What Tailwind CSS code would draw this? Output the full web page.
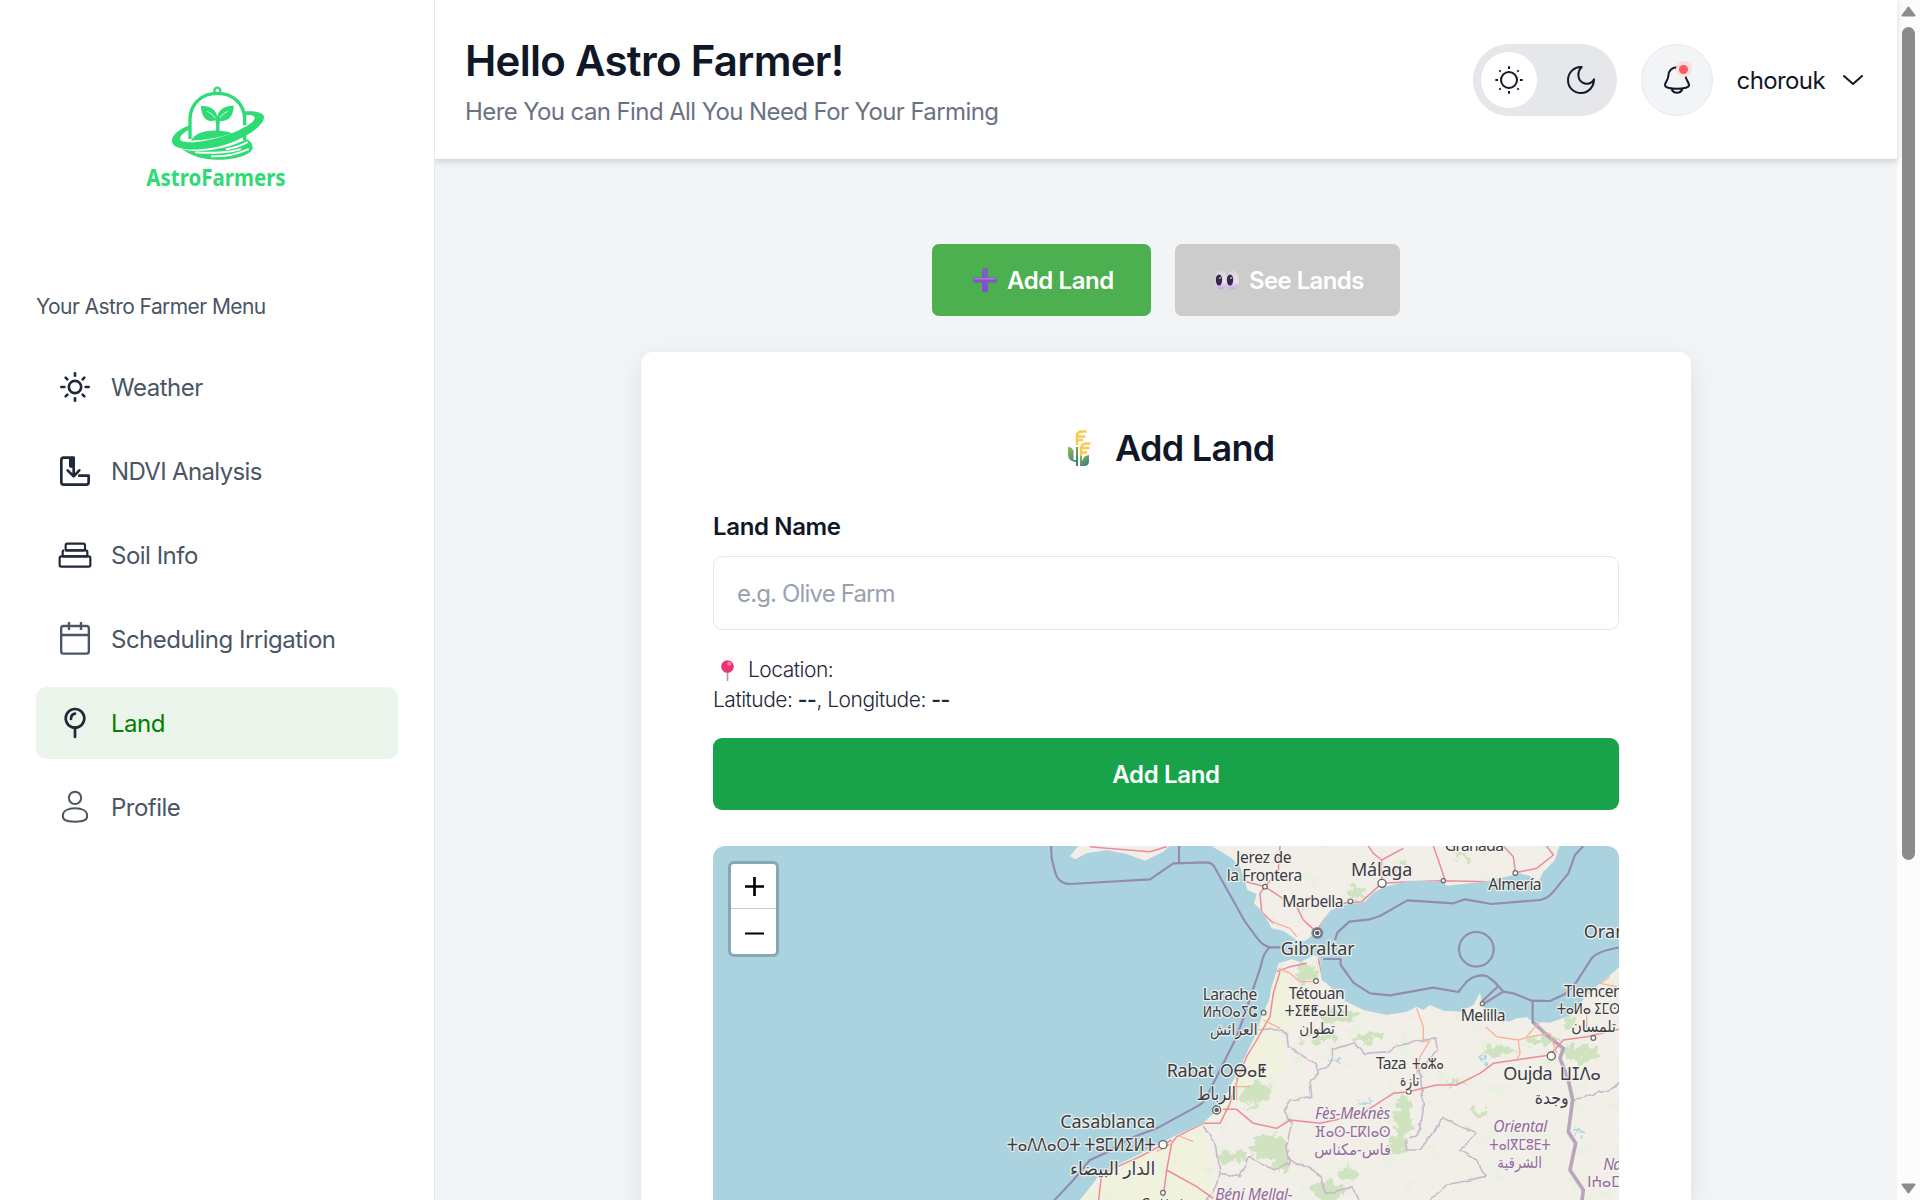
<!DOCTYPE html>
<html lang="en">
<head>
<meta charset="utf-8">
<title>Astro Farmers</title>
<script src="https://cdn.jsdelivr.net/npm/@tailwindcss/browser@4"></script>
</head>
<body class="h-[1200px] overflow-hidden bg-white font-['Inter',sans-serif] text-[24px] text-gray-900">
<div class="flex h-[1200px] w-[1920px]">

<aside class="relative z-20 w-[435px] shrink-0 border-r border-[#e2e8f0] bg-white">
  <svg class="ml-[120px] mt-[70px] block h-[130px] w-[200px]" viewBox="0 0 600 390" fill="none" stroke="#2edb74" stroke-linecap="round" stroke-linejoin="round">
    <circle cx="292" cy="62" r="9" stroke-width="7"/>
    <path d="M210 207V146C212 100 246 70 292 70S372 100 374 146V166M374 196V210" stroke-width="10" stroke-linecap="butt"/>
    <path d="M288 186C289 172 289 160 286 151C272 155 257 153 250 138C245 128 243 118 243 108C268 106 288 118 292 140C296 118 316 106 341 107C341 130 332 154 300 153C298 162 298 172 299 186Z" fill="#2edb74" stroke="none"/>
    <path d="M262 124Q278 130 286 144M322 124Q308 130 300 143" stroke="#fff" stroke-width="2.500"/>
    <path d="M213 212C225 188 262 180 292 182C312 182 326 185 336 190C300 203 250 211 213 212Z" fill="#2edb74" stroke="none"/>
    <path d="M375 124C408 122 432 127 432 142C432 168 376 206 310 226C254 243 160 246 156 216C153 195 182 175 209 166V178C192 187 180 197 180 207C183 224 250 217 300 202C350 188 403 160 404 145C404 135 392 134 375 136Z" fill="#2edb74" stroke="none"/>
    <path d="M185 236C222 254 332 236 379 207C392 213 398 223 398 234C394 256 342 270 292 269C250 268 212 258 185 236Z" fill="#2edb74" stroke="none"/>
    <path d="M228 247C270 251 330 247 360 238M276 259C310 260 352 252 384 238M320 238C350 232 368 224 381 217" stroke="#fff" stroke-width="6"/>
    <text x="79" y="348" textLength="418" lengthAdjust="spacingAndGlyphs" fill="#2edb74" stroke="none" font-family="Noto Sans, Open Sans, sans-serif" font-weight="700" font-size="71">AstroFarmers</text>
  </svg>
  <div class="mt-[92px] pl-9 text-[21px] leading-[30px] tracking-[-0.58px] text-gray-600">Your Astro Farmer Menu</div>
  <nav class="mt-[29px] flex flex-col gap-3 px-9 tracking-[-0.5px] text-gray-600">
    <a class="flex h-[72px] items-center gap-[18px] pl-[21px]">
      <svg class="size-9" viewBox="0 0 108 108" fill="none" stroke="#1f2937" stroke-width="8" stroke-linecap="round"><circle cx="54" cy="54" r="18.500"/><path d="M54 13v7M54 88v7M13 54h9M86 54h9M26 26l5 5M77 77l5 5M26 82l5-5M77 31l5-5"/></svg>
      <span class="pt-0.5">Weather</span></a>
    <a class="flex h-[72px] items-center gap-[18px] pl-[21px]">
      <svg class="size-9" viewBox="0 0 108 108" fill="none" stroke="#1f2937" stroke-width="8" stroke-linecap="round" stroke-linejoin="round"><path d="M50 14H20q-7 0-7 7V88q0 7 7 7H88q7 0 7-7V68H67M50 14V66M40 14V40M45 14V40M32 52L50 70L67 52"/></svg>
      <span class="pt-0.5 tracking-[-0.65px]">NDVI Analysis</span></a>
    <a class="flex h-[72px] items-center gap-[18px] pl-[21px]">
      <svg class="size-9" viewBox="0 0 108 108" fill="none" stroke="#1f2937" stroke-width="6.500" stroke-linejoin="round"><rect x="26" y="20" width="58" height="20" rx="5"/><path d="M24 40h62q5 0 5 5v13H17V45q0-5 5-5"/><rect x="8" y="58" width="92" height="31" rx="5"/></svg>
      <span class="pt-0.5">Soil Info</span></a>
    <a class="flex h-[72px] items-center gap-[18px] pl-[21px]">
      <svg class="size-9" viewBox="0 0 108 108" fill="none" stroke="#4b5563" stroke-width="7"><rect x="12.500" y="15" width="83" height="83" rx="7"/><path d="M12 42h84M36 3v24M72 3v24"/></svg>
      <span class="pt-0.5">Scheduling Irrigation</span></a>
    <a class="flex h-[72px] items-center gap-[18px] rounded-[10px] bg-[#ebf5ec] pl-[21px] text-[#008000]">
      <svg class="size-9" viewBox="0 0 108 108" fill="none" stroke="#1f2937" stroke-width="8" stroke-linecap="round"><circle cx="54" cy="40" r="28"/><path d="M54 68v28M42 42q0-14 12-16"/></svg>
      <span class="pt-0.5">Land</span></a>
    <a class="flex h-[72px] items-center gap-[18px] pl-[21px]">
      <svg class="size-9" viewBox="0 0 108 108" fill="none" stroke="#4b5563" stroke-width="6"><circle cx="54" cy="26.500" r="18.500"/><path d="M17.500 80C17.500 66 32 58 54 58S90.500 66 90.500 80C90.500 92 83 98 54 98S17.500 92 17.500 80Z"/></svg>
      <span class="pt-0.5">Profile</span></a>
  </nav>
</aside>

<div class="flex min-w-0 flex-1 flex-col bg-gray-100">
  <header class="z-10 flex h-[160px] shrink-0 items-start justify-between border-b border-[#d8dae6] bg-white pl-[30px] pr-[34px] shadow-[0_2px_6px_rgba(30,35,80,0.16)]">
    <div class="pt-[34px]">
      <h1 class="text-[42px] font-semibold leading-[54px] tracking-[-0.72px]">Hello Astro Farmer!</h1>
      <p class="mt-[6px] leading-9 tracking-[-0.6px] text-gray-500">Here You can Find All You Need For Your Farming</p>
    </div>
    <div class="flex items-center gap-6 pt-11">
      <div class="flex h-[72px] w-36 items-center rounded-full bg-[#e5e7eb] pl-[7px]">
        <div class="flex size-[58px] items-center justify-center rounded-full border border-gray-200 bg-white">
          <svg class="size-[30px]" viewBox="0 0 90 90" fill="none" stroke="#111827" stroke-width="6"><circle cx="45" cy="45" r="24"/><path d="M45 4v8M45 78v8M4 45h8M78 45h8M16 16l4 4M70 70l4 4M16 74l4-4M70 20l4-4"/></svg>
        </div>
        <svg class="ml-[28px] size-[30px]" viewBox="0 0 90 90" fill="none" stroke="#111827" stroke-width="6" stroke-linejoin="round"><path d="M47 6C26 4 6 22 6 45C6 68 23 84 46 84C67 84 84 66 84 43C78 56 62 60 50 53C34 44 33 20 47 6Z"/></svg>
      </div>
      <div class="relative flex size-[72px] items-center justify-center rounded-full border border-[#e2e8f0] bg-gray-100">
        <svg class="size-[30px]" viewBox="0 0 90 90" fill="none" stroke="#111827" stroke-width="6" stroke-linecap="round"><path d="M45 7C29 7 19 18 19 32C20 45 9 50 9 60Q9 66 18 68Q45 74 72 68Q81 66 81 60C81 50 70 45 71 32M28 72Q33 83 45 83T62 72"/></svg>
        <div class="absolute left-[34px] top-[16px] flex size-4 items-center justify-center rounded-full bg-[#f9dede]"><div class="size-[9px] rounded-full bg-[#f65c5c]"></div></div>
      </div>
      <div class="flex items-center gap-[18px]"><span class="pt-0.5 tracking-[-0.6px]">chorouk</span>
        <svg class="h-[12px] w-[20px]" viewBox="0 0 60 36" fill="none" stroke="#111827" stroke-width="6" stroke-linecap="round" stroke-linejoin="round"><path d="M3 6L30 30L57 6"/></svg></div>
    </div>
  </header>

  <main class="flex min-h-0 flex-1 flex-col items-center overflow-hidden pt-[84px]">
    <div class="flex gap-6 font-semibold text-white">
      <button class="flex h-[72px] w-[219px] items-center rounded-[7px] bg-[#4caf50] pl-[41px]">
        <svg class="mr-[10px] size-6" viewBox="0 0 24 24"><defs><linearGradient id="pl" x1="0" y1="0" x2="0" y2="1"><stop stop-color="#7a67b2"/><stop offset="1" stop-color="#8a45dd"/></linearGradient></defs><rect x="9" y="0" width="6" height="24" rx="2" fill="url(#pl)"/><rect x="0" y="9.500" width="24" height="5" rx="2" fill="#8450cd"/><rect x="1" y="10" width="22" height="1.500" rx=".7" fill="#a083cf"/></svg>
        <span class="pt-0.5 tracking-[-0.4px]">Add Land</span></button>
      <button class="flex h-[72px] w-[225px] items-center rounded-[7px] bg-[#cccccc] pl-10">
        <svg class="mr-[10px] size-6" viewBox="0 0 24 24"><defs><linearGradient id="ey" x1="0" y1="0" x2="0" y2="1"><stop stop-color="#d8d3da"/><stop offset=".6" stop-color="#e9e2ec"/><stop offset="1" stop-color="#c99fe3"/></linearGradient></defs><ellipse cx="6" cy="12" rx="6" ry="9.500" fill="url(#ey)"/><ellipse cx="18" cy="12" rx="6" ry="9.500" fill="url(#ey)"/><ellipse cx="4" cy="12" rx="3.200" ry="5.500" fill="#38274a"/><ellipse cx="15" cy="12" rx="3.200" ry="5.500" fill="#38274a"/><circle cx="5" cy="10" r="1" fill="#bbb"/><circle cx="16" cy="10" r="1" fill="#bbb"/></svg>
        <span class="whitespace-nowrap pt-0.5 tracking-[-0.6px]">See Lands</span></button>
    </div>

    <section class="mt-9 w-[1050px] shrink-0 rounded-t-[12px] bg-white px-[72px] pt-[72px] shadow-[0_8px_24px_rgba(30,35,60,0.10)]">
      <h2 class="flex h-12 items-center pl-[355px] text-[36px] font-semibold leading-12 tracking-[-0.7px]">
        <svg class="mr-[23px] h-9 w-6 shrink-0" viewBox="0 0 24 36"><defs><linearGradient id="lf" x1="0" y1="0" x2=".6" y2="1"><stop stop-color="#8cc04f"/><stop offset="1" stop-color="#3c7d83"/></linearGradient></defs><path d="M0 17q5 0 5.500 5v8H8V17h2v19H8v-4Q0 31 0 25Z" fill="url(#lf)"/><path d="M12 36V26h2v5q2-6 7-6v6q0 5-5 5Z" fill="url(#lf)"/><path d="M9 15V6Q9 1.500 14 1.500H18.500M9 6.500H17.500M9 10H15M13 26V18Q14 13.500 18 13.500H22.500M13.500 18H21.500M13.500 22.500H19" fill="none" stroke="#fbc94b" stroke-width="2.600"/></svg>
        <span class="whitespace-nowrap">Add Land</span></h2>
      <label class="mt-[37px] block font-semibold leading-9 tracking-[-0.35px]">Land Name</label>
      <div class="mt-[11px] flex h-[74px] items-center rounded-[9px] border border-gray-200 pl-[23px] pt-0.5 tracking-[-0.85px] text-gray-400">e.g. Olive Farm</div>
      <div class="mt-[25px] text-[21px] font-light leading-[30px] tracking-[-0.5px] text-gray-800">
        <div class="flex items-center"><svg class="ml-[8px] mr-[14px] h-[21px] w-[13px]" viewBox="0 0 13 21"><path d="M6.500 11V21" stroke="#a9a0b4" stroke-width="1.700"/><circle cx="6.500" cy="6.500" r="6.300" fill="#ed3472"/><circle cx="8.300" cy="3.800" r="2" fill="#ff86a8"/></svg>Location:</div>
        <div>Latitude: <b class="font-semibold">--</b>, Longitude: <b class="font-semibold">--</b></div>
      </div>
      <button class="mt-[23px] block h-[72px] w-full rounded-[9px] bg-[#18a34a] pt-0.5 font-semibold tracking-[-0.35px] text-white">Add Land</button>

      <div class="relative mt-9 h-[354px] overflow-hidden rounded-t-[12px] bg-[#aad3df]">
        <svg class="block h-[354px] w-[906px]" viewBox="-831 18 2718 1062">
          <defs>
            <clipPath id="land"><path d="M265 18L240 48L255 58L290 40L350 30L410 42L465 62L520 35L538 18ZM665 18L725 55L750 80L762 115L772 150L800 162L792 190L812 210L835 245L845 265L880 272L920 300L945 303L980 275L1000 240L1020 212L1060 195L1110 188L1125 185L1150 158L1185 140L1260 122L1360 125L1370 137L1480 125L1505 120L1560 108L1590 100L1620 108L1630 122L1650 118L1660 95L1695 60L1708 18ZM865 370L905 358L930 366L975 345L990 355L995 420L1010 430L1060 480L1120 510L1190 525L1250 515L1280 500L1300 510L1320 495L1360 512L1410 515L1450 495L1470 458L1477 490L1487 510L1555 545L1580 535L1610 532L1630 545L1680 548L1730 530L1760 510L1785 470L1830 430L1860 405L1900 370V1090H262L310 1030L330 1000L400 965L450 942L510 912L560 885L640 850L680 812L700 785L720 740L745 695L775 630L800 580L815 530L838 480L845 440L860 395Z"/></clipPath>
            <filter id="rough" x="-20%" y="-20%" width="140%" height="140%"><feTurbulence type="fractalNoise" baseFrequency=".035" numOctaves="4" seed="7" result="n"/><feDisplacementMap in="SourceGraphic" in2="n" scale="60" xChannelSelector="R" yChannelSelector="G"/></filter>
            <filter id="speck" x="0" y="0" width="100%" height="100%"><feTurbulence type="fractalNoise" baseFrequency=".022" numOctaves="4" seed="12"/><feColorMatrix values="0 0 0 0 .78  0 0 0 0 .88  0 0 0 0 .7  0 6 0 0 -3.500"/></filter>
            <filter id="line"><feTurbulence type="fractalNoise" baseFrequency=".03" numOctaves="2" seed="3" result="n"/><feDisplacementMap in="SourceGraphic" in2="n" scale="16" xChannelSelector="R" yChannelSelector="G"/></filter>
          </defs>
          <g clip-path="url(#land)">
            <rect x="200" y="0" width="1700" height="1100" fill="#f2efe9"/>
            <path d="M850 360L980 500L870 570L890 680L780 760L640 860L680 1090H250L600 830L800 560Z" fill="#f1f2dd"/>
            <rect x="200" y="18" width="1700" height="1070" filter="url(#speck)" opacity=".6"/>
            <g fill="#c5dfb2" filter="url(#rough)" opacity=".75">
              <ellipse cx="800" cy="765" rx="50" ry="38"/><ellipse cx="840" cy="920" rx="55" ry="35"/><ellipse cx="730" cy="950" rx="40" ry="20"/><ellipse cx="880" cy="975" rx="30" ry="30"/>
              <ellipse cx="950" cy="400" rx="25" ry="35"/><ellipse cx="1040" cy="530" rx="60" ry="20"/><ellipse cx="990" cy="590" rx="50" ry="15"/><ellipse cx="1130" cy="590" rx="50" ry="14"/><ellipse cx="1240" cy="830" rx="26" ry="60"/><ellipse cx="1220" cy="910" rx="25" ry="35"/>
              <ellipse cx="1530" cy="635" rx="45" ry="16"/><ellipse cx="1660" cy="600" rx="50" ry="12"/><ellipse cx="1770" cy="640" rx="55" ry="24"/><ellipse cx="1735" cy="540" rx="16" ry="20"/><ellipse cx="1470" cy="815" rx="30" ry="14"/><ellipse cx="1400" cy="725" rx="36" ry="7"/>
              <ellipse cx="1020" cy="1050" rx="50" ry="25"/><ellipse cx="1070" cy="1000" rx="30" ry="20"/><ellipse cx="1100" cy="160" rx="34" ry="15"/><ellipse cx="1240" cy="75" rx="20" ry="8"/><ellipse cx="1420" cy="50" rx="25" ry="8"/>
            </g>
            <g fill="#b0d8e5" filter="url(#rough)"><ellipse cx="1040" cy="665" rx="22" ry="5"/><ellipse cx="1130" cy="782" rx="22" ry="4"/><ellipse cx="1480" cy="655" rx="8" ry="10"/><ellipse cx="1770" cy="878" rx="12" ry="3"/><ellipse cx="1020" cy="575" rx="8" ry="4"/></g>
            <g fill="none" stroke="#c9b9cc" stroke-width="5" stroke-linejoin="round" filter="url(#line)">
              <path d="M805 570L850 565L890 580L895 620L930 640L975 670L985 700L960 720L965 770L900 780L880 810L905 850L890 920L900 970L850 990L780 950L750 1010L690 1000L680 920L640 855"/>
              <path d="M985 690L1020 680L1025 630L1095 608L1120 640L1200 635L1240 610L1340 595L1345 625L1290 690L1300 800L1290 880L1245 900L1250 930L1290 930L1360 835L1450 875L1455 885L1410 930L1460 960L1485 1010L1370 1035L1310 1090"/>
              <path d="M900 960L960 985L990 1010L1010 1060L1090 1040L1110 1090M1740 790L1800 765L1860 750L1900 720M640 1090L680 1040L690 1000"/>
            </g>
            <path d="M1628 545L1670 585L1720 625L1710 655L1735 720L1748 780L1735 875L1757 910L1740 990L1780 1050L1775 1090" fill="none" stroke="#b9a5bd" stroke-width="11" stroke-linejoin="round"/>
            <g fill="none" stroke="#ef8a9c" stroke-width="4.500" stroke-linejoin="round">
              <path d="M870 18L865 90L825 140L810 160L815 215L850 250M825 140L870 170L920 200L940 240L978 275M825 140L750 120M978 275L1005 235L1060 190L1115 185L1175 130L1260 125L1360 122L1500 125M1135 18L1150 40L1175 60V130M1175 60L1240 25M1330 18L1345 60L1365 120M1576 98L1570 50L1540 18M1576 98L1640 85L1690 45L1670 18M300 20L350 25L480 35L530 20"/>
              <path d="M870 395L850 460L840 530L800 600L770 650L745 710L720 790L690 850L640 850L560 890L545 910L530 990L620 1040L670 1075M530 990L520 1070M545 900L450 950L335 1000L325 1090M860 395L900 380L950 370M985 355L998 415"/>
              <path d="M700 808H740L790 850L860 865L900 840L990 850L1060 835L1140 805L1210 760L1255 755L1340 735L1400 735L1470 700L1510 670L1680 645M1680 645L1720 600L1790 590L1900 565"/>
            </g>
            <g fill="none" stroke="#f8b29b" stroke-width="4" stroke-linejoin="round"><path d="M845 245L900 265L920 290M865 385L900 400L930 425L975 425M820 540L870 565M1280 505L1300 560V600L1318 605L1290 650L1280 700M1487 560L1520 590L1585 600L1620 590L1680 580L1700 640M1585 600L1590 640L1580 660M1610 590L1650 545M560 885L610 905M545 910L500 935M740 740H780M740 700V780M1860 410L1830 430L1880 440M1790 500V570"/></g>
          </g>
          <g fill="none" stroke="#948bb0" stroke-width="6.500" stroke-linejoin="round">
            <path d="M183 18L185 55L195 95Q205 132 240 132L480 118L550 70L650 67Q668 68 675 84L765 245L800 292Q815 315 840 322H875M567 18V67M840 322Q820 335 812 380L765 520L740 590L660 750Q650 785 620 800L500 865L420 895L345 940L300 960L250 1020L190 1084"/>
            <path d="M1035 300L1042 278L1078 245L1140 238L1170 228L1252 181L1390 190L1425 178L1505 192L1650 180Q1675 175 1690 155L1735 100L1755 45L1780 18M1000 357H1052V375L1090 428L1140 460L1200 466L1330 443L1405 456L1430 425Q1458 400 1490 408Q1510 420 1525 438L1540 455L1480 492M1525 438L1475 485M1540 455L1570 460L1625 482L1680 483L1725 462L1760 425L1805 355Q1825 332 1890 322M1628 482V550"/>
            <circle cx="1459" cy="328" r="52"/>
          </g>
          <g fill="#fff" stroke="#666" stroke-width="4"><circle cx="1176" cy="130" r="12"/><circle cx="519" cy="914" r="12"/><circle cx="1684" cy="648" r="12"/><circle cx="982" cy="279" r="18" fill="#8d85a8" stroke="none"/><circle cx="982" cy="279" r="12"/><circle cx="982" cy="279" r="5" fill="#555"/><circle cx="680" cy="810" r="12"/><circle cx="680" cy="810" r="5" fill="#555"/>
            <g stroke-width="3.500"><circle cx="825" cy="140" r="7"/><circle cx="1081" cy="184" r="7"/><circle cx="1360" cy="122" r="6"/><circle cx="1576" cy="99" r="7"/><circle cx="978" cy="423" r="7"/><circle cx="821" cy="518" r="7"/><circle cx="1477" cy="491" r="6"/><circle cx="1810" cy="594" r="7"/><circle cx="1256" cy="755" r="7"/><circle cx="519" cy="1058" r="7"/></g></g>
          <g font-family="Noto Sans, DejaVu Sans, sans-serif" fill="#3c3c40" stroke="#f5f3ef" stroke-opacity=".85" stroke-width="8" stroke-linejoin="round" paint-order="stroke" font-size="47">
            <text x="738" y="68" textLength="167">Jerez de</text><text x="710" y="122" textLength="227">la Frontera</text>
            <text x="1083" y="107" font-size="54" textLength="184">Málaga</text><text x="877" y="202" textLength="184">Marbella</text>
            <text x="1364" y="32" textLength="178">Granada</text><text x="1495" y="150" textLength="160">Almería</text>
            <text x="872" y="345" font-size="54" textLength="222">Gibraltar</text><text x="1781" y="295" font-size="54" textLength="128">Oran</text>
            <text x="638" y="479" textLength="164">Larache</text><text x="638" y="530" textLength="164" lengthAdjust="spacingAndGlyphs">ⵍⵄⵔⴰⵢⵛ</text><text x="660" y="585" textLength="143" lengthAdjust="spacingAndGlyphs">العرائش</text>
            <text x="896" y="476" textLength="168">Tétouan</text><text x="884" y="528" textLength="190" lengthAdjust="spacingAndGlyphs">ⵜⵉⵟⵟⴰⵡⵉⵏ</text><text x="928" y="583" textLength="106" lengthAdjust="spacingAndGlyphs">تطوان</text>
            <text x="1412" y="542" textLength="135">Melilla</text>
            <text x="1722" y="470" textLength="176">Tlemcen</text><text x="1700" y="521" textLength="190" lengthAdjust="spacingAndGlyphs">ⵜⴰⵍⴰ ⵉⵎⵙ</text><text x="1744" y="577" textLength="134" lengthAdjust="spacingAndGlyphs">تلمسان</text>
            <text x="530" y="711" font-size="54" textLength="142">Rabat</text><text x="690" y="711" font-size="54" textLength="140" lengthAdjust="spacingAndGlyphs">ⵔⴱⴰⵟ</text><text x="620" y="781" font-size="54" textLength="118" lengthAdjust="spacingAndGlyphs">الرباط</text>
            <text x="211" y="864" font-size="54" textLength="285">Casablanca</text><text x="50" y="933" font-size="54" textLength="447" lengthAdjust="spacingAndGlyphs">ⵜⴰⴷⴷⴰⵔⵜ ⵜⵓⵎⵍⵉⵍⵜ</text><text x="240" y="1006" font-size="54" textLength="256" lengthAdjust="spacingAndGlyphs">الدار البيضاء</text>
            <text x="1158" y="686" textLength="92">Taza</text><text x="1266" y="686" textLength="95" lengthAdjust="spacingAndGlyphs">ⵜⴰⵣⴰ</text><text x="1230" y="738" textLength="58" lengthAdjust="spacingAndGlyphs">تازة</text>
            <text x="1540" y="719" font-size="54" textLength="148">Oujda</text><text x="1710" y="719" font-size="54" textLength="122" lengthAdjust="spacingAndGlyphs">ⵡⵊⴷⴰ</text><text x="1634" y="792" font-size="52" textLength="102" lengthAdjust="spacingAndGlyphs">وجدة</text>
            <text x="455" y="1111" textLength="130">Settat</text>
            <g fill="#936c9c"><text x="975" y="837" font-style="italic" textLength="226">Fès-Meknès</text><text x="973" y="891" textLength="229" lengthAdjust="spacingAndGlyphs">ⴼⴰⵙ-ⵎⴽⵏⴰⵙ</text><text x="973" y="945" textLength="230" lengthAdjust="spacingAndGlyphs">فاس-مكناس</text>
            <text x="1510" y="877" font-style="italic" textLength="162">Oriental</text><text x="1498" y="930" textLength="184" lengthAdjust="spacingAndGlyphs">ⵜⴰⵏⴳⵎⵓⴹⵜ</text><text x="1522" y="984" textLength="134" lengthAdjust="spacingAndGlyphs">الشرقية</text>
            <text x="1840" y="990" font-style="italic" textLength="140">Naâma</text><text x="1792" y="1042" textLength="125" lengthAdjust="spacingAndGlyphs">ⵏⵄⴰⵎⴰ</text><text x="676" y="1080" font-style="italic" textLength="232">Béni Mellal-</text></g>
          </g>
        </svg>
        <div class="absolute left-[15px] top-[15px] flex h-[96px] w-[51px] flex-col rounded-[6px] border-3 border-[#87a8b2] bg-white">
          <div class="flex h-[45px] items-center justify-center border-b border-[#ccc] pl-0.5 pt-px"><svg class="size-[19px]" viewBox="0 0 19 19"><path d="M0 9.500h19M9.500 0v19" stroke="#000" stroke-width="2.700"/></svg></div>
          <div class="flex h-[45px] items-center justify-center pl-0.5 pt-[3px]"><svg class="size-[19px]" viewBox="0 0 19 19"><path d="M0 9.500h19" stroke="#000" stroke-width="2.200"/></svg></div>
        </div>
      </div>
    </section>
  </main>
</div>

<div class="flex w-[23px] shrink-0 flex-col items-center justify-between bg-[#fcfcfc] py-[6px]">
  <svg class="h-[11px] w-[15px]" viewBox="0 0 15 11"><path d="M7.500 1.500L13.500 9.500H1.500Z" fill="#8b8b8b" stroke="#8b8b8b" stroke-width="2" stroke-linejoin="round"/></svg>
  <div class="mb-auto mt-[10px] h-[833px] w-[13px] rounded-full bg-[#8b8b8b]"></div>
  <svg class="h-[11px] w-[15px]" viewBox="0 0 15 11"><path d="M7.500 9.500L13.500 1.500H1.500Z" fill="#8b8b8b" stroke="#8b8b8b" stroke-width="2" stroke-linejoin="round"/></svg>
</div>
</div>
</body>
</html>
